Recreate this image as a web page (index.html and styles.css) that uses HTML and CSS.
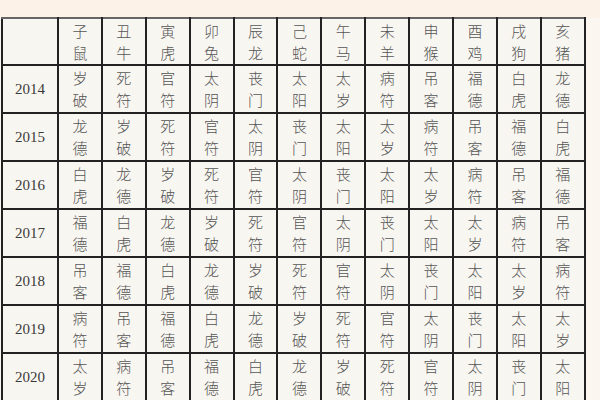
FILE: index.html
```html
<!DOCTYPE html>
<html lang="zh">
<head>
<meta charset="utf-8">
<link rel="stylesheet" href="styles.css">
</head>
<body>
<div class="page">
<table class="grid">
<colgroup><col class="c-year"><col span="12" class="c-cell"></colgroup>
<tr class="head"><td class="year"></td><td>子<br>鼠</td><td>丑<br>牛</td><td>寅<br>虎</td><td>卯<br>兔</td><td>辰<br>龙</td><td>己<br>蛇</td><td>午<br>马</td><td>未<br>羊</td><td>申<br>猴</td><td>酉<br>鸡</td><td>戌<br>狗</td><td>亥<br>猪</td></tr>
<tr><td class="year">2014</td><td>岁<br>破</td><td>死<br>符</td><td>官<br>符</td><td>太<br>阴</td><td>丧<br>门</td><td>太<br>阳</td><td>太<br>岁</td><td>病<br>符</td><td>吊<br>客</td><td>福<br>德</td><td>白<br>虎</td><td>龙<br>德</td></tr>
<tr><td class="year">2015</td><td>龙<br>德</td><td>岁<br>破</td><td>死<br>符</td><td>官<br>符</td><td>太<br>阴</td><td>丧<br>门</td><td>太<br>阳</td><td>太<br>岁</td><td>病<br>符</td><td>吊<br>客</td><td>福<br>德</td><td>白<br>虎</td></tr>
<tr><td class="year">2016</td><td>白<br>虎</td><td>龙<br>德</td><td>岁<br>破</td><td>死<br>符</td><td>官<br>符</td><td>太<br>阴</td><td>丧<br>门</td><td>太<br>阳</td><td>太<br>岁</td><td>病<br>符</td><td>吊<br>客</td><td>福<br>德</td></tr>
<tr><td class="year">2017</td><td>福<br>德</td><td>白<br>虎</td><td>龙<br>德</td><td>岁<br>破</td><td>死<br>符</td><td>官<br>符</td><td>太<br>阴</td><td>丧<br>门</td><td>太<br>阳</td><td>太<br>岁</td><td>病<br>符</td><td>吊<br>客</td></tr>
<tr><td class="year">2018</td><td>吊<br>客</td><td>福<br>德</td><td>白<br>虎</td><td>龙<br>德</td><td>岁<br>破</td><td>死<br>符</td><td>官<br>符</td><td>太<br>阴</td><td>丧<br>门</td><td>太<br>阳</td><td>太<br>岁</td><td>病<br>符</td></tr>
<tr><td class="year">2019</td><td>病<br>符</td><td>吊<br>客</td><td>福<br>德</td><td>白<br>虎</td><td>龙<br>德</td><td>岁<br>破</td><td>死<br>符</td><td>官<br>符</td><td>太<br>阴</td><td>丧<br>门</td><td>太<br>阳</td><td>太<br>岁</td></tr>
<tr><td class="year">2020</td><td>太<br>岁</td><td>病<br>符</td><td>吊<br>客</td><td>福<br>德</td><td>白<br>虎</td><td>龙<br>德</td><td>岁<br>破</td><td>死<br>符</td><td>官<br>符</td><td>太<br>阴</td><td>丧<br>门</td><td>太<br>阳</td></tr>
</table>
</div>
</body>
</html>
```
FILE: styles.css
```css
html, body {
  margin: 0;
  padding: 0;
  background: #fbf6f0;
  overflow: hidden;
}
.page {
  width: 600px;
  height: 400px;
  overflow: hidden;
  background: linear-gradient(#fcf2e7 0, #fcf2e7 18px, #fbf6f0 18px);
  padding: 17px 0 0 1px;
  box-sizing: border-box;
}
.grid {
  border-collapse: collapse;
  table-layout: fixed;
  width: 583px;
  background: #f8f6f1;
  font-family: "Noto Sans CJK SC", "Liberation Serif", serif;
  font-size: 15px;
  line-height: 22px;
  color: #555;
  font-weight: 300;
}
.c-year { width: 56px; }
.c-cell { width: 43.9px; }
.grid td {
  border: 2px solid #222;
  text-align: center;
  vertical-align: middle;
  padding: 0;
  height: 46px;
}
.grid tr.head td {
  border-top-color: #666;
  height: 45px;
}
.grid td.year {
  font-family: "Liberation Serif", serif;
  font-size: 15px;
  font-weight: 400;
  color: #3a3a3a;
}
```
